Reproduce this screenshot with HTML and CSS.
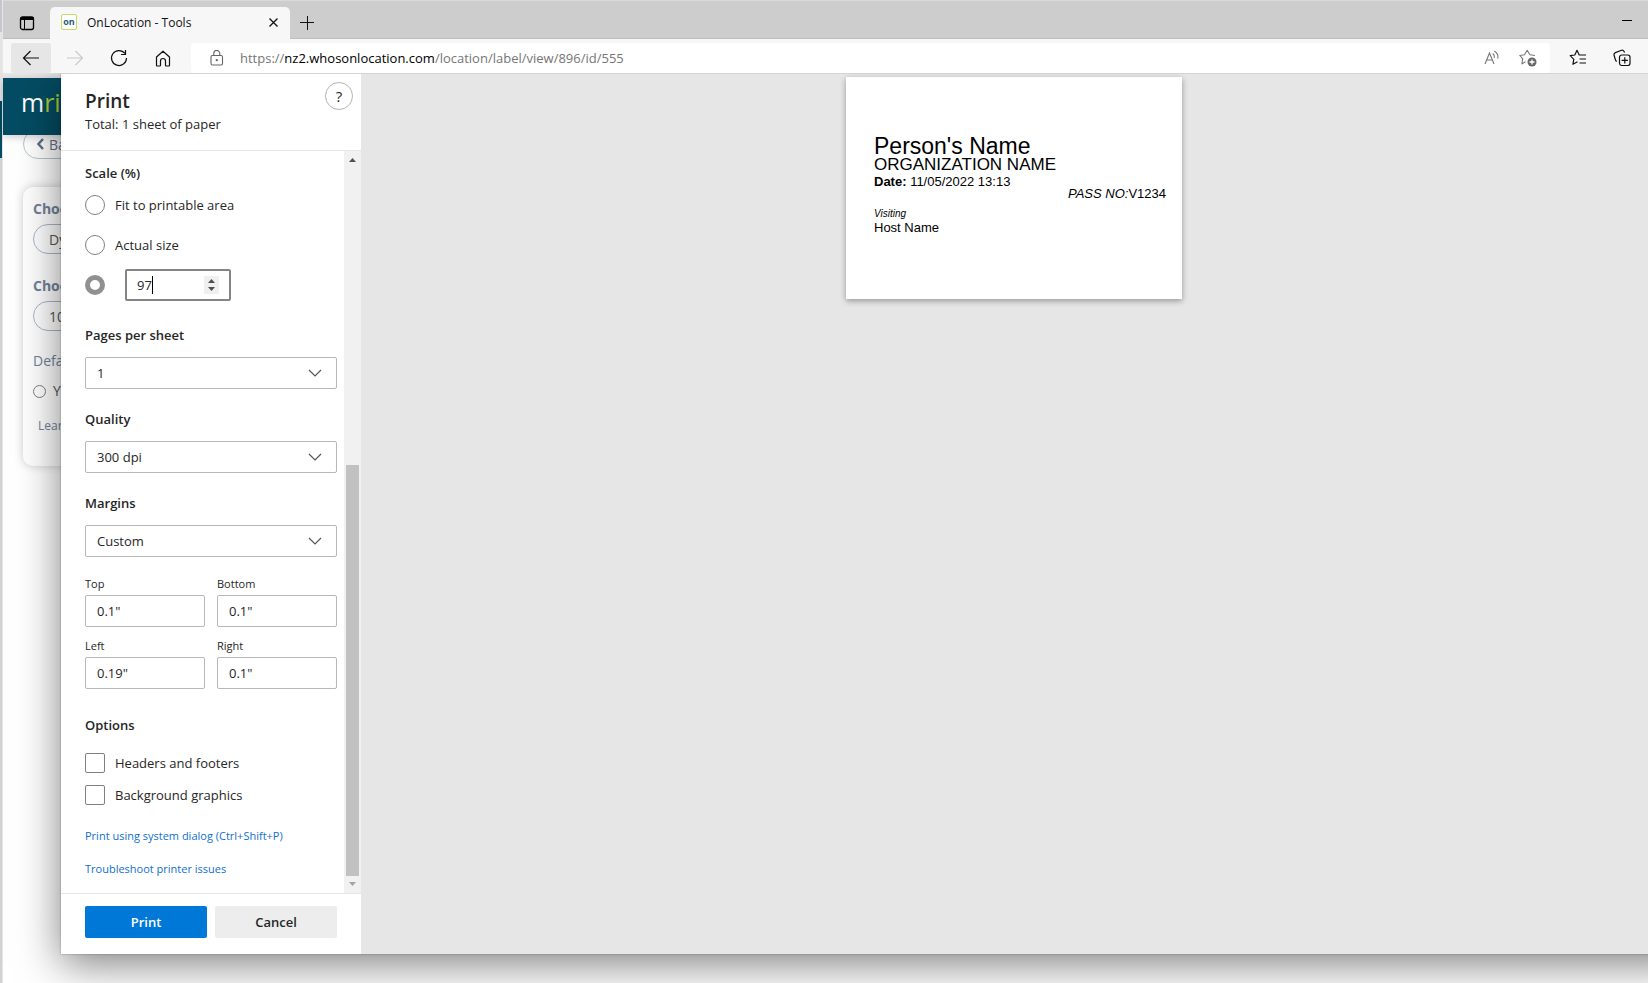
FILE: index.html
```
<!DOCTYPE html>
<html lang="en">
<head>
  <meta charset="UTF-8">
  <meta name="viewport" content="width=device-width, initial-scale=1.0">
  <title>OnLocation - Tools</title>
  <link rel="stylesheet" href="styles.css">
</head>
<body>
  <div class="window-edge"></div>
  <div class="browser">
    <header class="chrome">
      <div class="tab-bar">
        <button class="tab-actions" aria-label="Tab actions">
          <svg width="16" height="16" viewBox="0 0 16 16" fill="none" stroke="#000"><rect x="1.5" y="2" width="13" height="12.5" rx="2" stroke-width="1.3"/><path d="M1.500 3.500h13" stroke-width="3"/><path d="M5.500 5v9"/></svg>
        </button>
        <div class="tab">
          <span class="favicon">on</span>
          <span class="tab-title">OnLocation - Tools</span>
          <button class="tab-close" aria-label="Close tab">
            <svg width="9" height="9" viewBox="0 0 9 9" stroke="#111" stroke-width="1.3"><path d="M.5.5l8 8M8.500.5l-8 8"/></svg>
          </button>
        </div>
        <button class="new-tab" aria-label="New tab">
          <svg width="14" height="14" viewBox="0 0 14 14" stroke="#111"><path d="M0 6.500h14M7.500 0v14"/></svg>
        </button>
        <button class="minimize" aria-label="Minimize">
          <svg width="10" height="10" viewBox="0 0 10 10" stroke="#000"><path d="M0 2.500h10"/></svg>
        </button>
      </div>
      <nav class="toolbar">
        <button class="nav-btn active" aria-label="Back">
          <svg width="18" height="16" viewBox="0 0 18 16" fill="none" stroke="#111" stroke-width="1.2"><path d="M8.500 1l-7 7 7 7M1.500 8H17"/></svg>
        </button>
        <button class="nav-btn" aria-label="Forward">
          <svg width="18" height="16" viewBox="0 0 18 16" fill="none" stroke="#c8c8c8" stroke-width="1.1"><path d="M9.500 1l7 7-7 7M16.500 8H1"/></svg>
        </button>
        <button class="nav-btn" aria-label="Refresh">
          <svg width="18" height="18" viewBox="0 0 18 18" fill="none" stroke="#111" stroke-width="1.200"><path d="M16.500 9A7.500 7.500 0 1 1 14.900 4.400M15.500 1v4.500H11"/></svg>
        </button>
        <button class="nav-btn" aria-label="Home">
          <svg width="16" height="17" viewBox="0 0 16 17" fill="none" stroke="#111" stroke-width="1.200" stroke-linejoin="round"><path d="M1.500 7L8 1.200 14.500 7v8.300a.7.7 0 0 1-.7.7h-2.600a.7.7 0 0 1-.7-.7V11a2.500 2.500 0 0 0-5 0v4.300a.7.7 0 0 1-.7.7H2.200a.7.7 0 0 1-.7-.7z"/></svg>
        </button>
        <div class="address">
          <svg class="lock" width="14" height="16" viewBox="0 0 14 16" fill="none" stroke="#666" stroke-width="1.100"><rect x="1" y="5.500" width="11.500" height="9.500" rx="1.500"/><path d="M3.800 5.500v-2a3 3 0 0 1 6 0v2"/><circle cx="6.800" cy="10.200" r=".6" fill="#666"/></svg>
          <span class="url">https://<b>nz2.whosonlocation.com</b>/location/label/view/896/id/555</span>
          <button class="addr-btn" aria-label="Read aloud">
            <svg width="17" height="16" viewBox="0 0 17 16" fill="none" stroke="#777" stroke-width="1.100"><path d="M1 14L5.500 3l4.500 11M2.600 10h5.800M8.800 3.500q2 1.600 1.600 4.300M10.300 1q4.700 3 3.500 7.600"/></svg>
          </button>
          <button class="addr-btn" aria-label="Add to favorites">
            <svg width="18" height="18" viewBox="0 0 18 18" fill="none" stroke="#777" stroke-width="1.100" stroke-linejoin="round"><path d="M6.500 12.700l-3.600 2.200.8-5L.8 6.500l4.700-.7 2.700-4.500 2.700 4.500 5 .7"/><circle cx="13" cy="13" r="4.500" fill="#666" stroke="none"/><path d="M10.500 13h5M13 10.500v5" stroke="#fff" stroke-width="1.300"/></svg>
          </button>
        </div>
        <button class="side-btn" aria-label="Favorites">
          <svg width="18" height="18" viewBox="0 0 18 18" fill="none" stroke="#111" stroke-width="1.200" stroke-linejoin="round"><path d="M8.500 12.700l-4.600 2.600.9-5L1.200 6.700l4.600-.7L8 1.300 10.200 6H17M10.500 10H17M10.500 14H17"/></svg>
        </button>
        <button class="side-btn" aria-label="Collections">
          <svg width="18" height="18" viewBox="0 0 18 18" fill="none" stroke="#111" stroke-width="1.200"><path d="M3.800 12.500q-1-.5-1.400-1.800L1 6q-.3-1.800 1.400-2.400L8.500 1.300q1.600-.5 2.600 1.200l.5 1"/><rect x="6.500" y="6" width="10.500" height="10.500" rx="2.200"/><path d="M11.800 8.200v6.200M8.600 11.300h6.300"/></svg>
        </button>
      </nav>
    </header>

    <main class="page">
      <div class="site-header"><span class="logo">m<i>ri</i></span></div>
      <a class="back" href="#">
        <svg width="7" height="12" viewBox="0 0 7 12" fill="none" stroke="#5f7186" stroke-width="2.4"><path d="M6 1L1.500 6 6 11"/></svg>Back
      </a>
      <form class="label-card">
        <label class="card-title" for="printer">Choose</label>
        <input class="pill" id="printer" type="text" value="Dymo">
        <label class="card-title" for="label-size">Choose</label>
        <input class="pill" id="label-size" type="text" value="101">
        <p class="default">Default</p>
        <label class="yes"><input type="radio" name="default">Yes</label>
        <a class="learn" href="#">Learn</a>
      </form>
    </main>
  </div>

  <div class="print-dialog" role="dialog" aria-label="Print">
    <form class="panel">
      <div class="panel-header">
        <div>
          <h1>Print</h1>
          <p>Total: 1 sheet of paper</p>
        </div>
        <button type="button" class="help" aria-label="Help">?</button>
      </div>

      <div class="panel-body">
        <div class="settings">
          <fieldset class="scale">
            <legend>Scale (%)</legend>
            <label class="choice"><input type="radio" name="scale">Fit to printable area</label>
            <label class="choice"><input type="radio" name="scale">Actual size</label>
            <div class="custom-scale">
              <input type="radio" name="scale" aria-label="Custom scale" checked>
              <div class="number-box">
                <input type="number" value="97" aria-label="Scale percent">
                <span class="caret"></span>
                <svg width="15" height="18" viewBox="0 0 15 18"><rect width="15" height="18" fill="#f0f0f0"/><path d="M4 7l3.500-4L11 7zM4 11l3.500 4 3.500-4z" fill="#505050"/></svg>
              </div>
            </div>
          </fieldset>

          <div class="setting">
            <label for="pages">Pages per sheet</label>
            <div class="select-box">
              <select id="pages"><option>1</option></select>
              <svg width="14" height="8" viewBox="0 0 14 8"><path d="M1 1l6 6 6-6"/></svg>
            </div>
          </div>
          <div class="setting">
            <label for="quality">Quality</label>
            <div class="select-box">
              <select id="quality"><option>300 dpi</option></select>
              <svg width="14" height="8" viewBox="0 0 14 8"><path d="M1 1l6 6 6-6"/></svg>
            </div>
          </div>
          <div class="setting">
            <label for="margins">Margins</label>
            <div class="select-box">
              <select id="margins"><option>Custom</option></select>
              <svg width="14" height="8" viewBox="0 0 14 8"><path d="M1 1l6 6 6-6"/></svg>
            </div>
          </div>

          <div class="margin-grid">
            <label>Top<input type="text" value='0.1"'></label>
            <label>Bottom<input type="text" value='0.1"'></label>
            <label>Left<input type="text" value='0.19"'></label>
            <label>Right<input type="text" value='0.1"'></label>
          </div>

          <fieldset class="options">
            <legend>Options</legend>
            <label class="choice"><input type="checkbox">Headers and footers</label>
            <label class="choice"><input type="checkbox">Background graphics</label>
          </fieldset>

          <div class="links">
            <a href="#">Print using system dialog (Ctrl+Shift+P)</a>
            <a href="#">Troubleshoot printer issues</a>
          </div>
        </div>

        <div class="scrollbar">
          <svg width="7" height="4" viewBox="0 0 7 4"><path d="M0 4l3.500-4L7 4z" fill="#505050"/></svg>
          <div class="track"><div class="thumb"></div></div>
          <svg width="7" height="4" viewBox="0 0 7 4"><path d="M0 0l3.500 4L7 0z" fill="#a3a3a3"/></svg>
        </div>
      </div>

      <div class="panel-footer">
        <button type="submit" class="primary">Print</button>
        <button type="button">Cancel</button>
      </div>
    </form>

    <section class="preview">
      <div class="sheet">
        <p class="person">Person's Name</p>
        <p class="org">ORGANIZATION NAME</p>
        <p class="date"><b>Date:</b> 11/05/2022 13:13</p>
        <p class="pass"><i>PASS NO:</i>V1234</p>
        <p class="visiting">Visiting</p>
        <p class="host">Host Name</p>
      </div>
    </section>
  </div>
</body>
</html>
```
FILE: styles.css
```
* { box-sizing: border-box; margin: 0; padding: 0; }

body {
  display: flex;
  position: relative;
  height: 100vh;
  overflow: hidden;
  background: #fff;
  font-family: "Segoe UI", "Open Sans", "Noto Sans", sans-serif;
  font-size: 13px;
  color: #262626;
}

button, input, select { font: inherit; color: inherit; }
button { border: 0; background: none; }
fieldset { border: 0; }
a { text-decoration: none; }

.window-edge {
  width: 3px;
  flex-shrink: 0;
  border-right: 1px solid #e6e6e6;
  background: linear-gradient(#c4c8cc 32px, #e4e4e4 32px, #e4e4e4 101px, #044c63 101px, #044c63 158px, #d2d2d2 158px);
}

.browser {
  flex: 1;
  display: flex;
  flex-direction: column;
  min-width: 0;
}

/* browser chrome */
.chrome {
  position: relative;
  z-index: 2;
}

.tab-bar {
  display: flex;
  align-items: flex-end;
  height: 39px;
  background: #cdcdcd;
  border-top: 1px solid #dadada;
  box-shadow: inset 0 -1px #bebebe;
}

.tab-bar button {
  display: flex;
  align-items: center;
  justify-content: center;
  height: 32px;
}

.tab-actions { width: 47px; }

.tab {
  display: flex;
  align-items: center;
  width: 240px;
  height: 32px;
  padding: 0 2px 2px 11px;
  background: #f7f7f7;
  border-radius: 5px 5px 0 0;
  font-size: 12px;
  color: #111;
}

.favicon {
  width: 16px;
  height: 16px;
  margin-right: 10px;
  border: 1px solid #c8d96a;
  border-radius: 2px;
  background: #fff;
  color: #1d6078;
  font-size: 9px;
  font-weight: 700;
  line-height: 13px;
  text-align: center;
}

.tab-title { flex: 1; }
.tab-close { width: 30px; }
.new-tab { width: 34px; }
.minimize { width: 42px; margin-left: auto; }

.toolbar {
  display: flex;
  align-items: center;
  height: 34px;
  padding: 4px 0 0 8px;
  background: #f7f7f7;
}

.toolbar button {
  display: flex;
  align-items: center;
  justify-content: center;
  height: 30px;
}

.nav-btn { width: 40px; margin-right: 4px; border-radius: 3px; }
.toolbar .active { background: #e6e6e6; }

.address {
  flex: 1;
  display: flex;
  align-items: center;
  height: 30px;
  margin-left: 4px;
  padding: 0 4px 0 19px;
  background: #fff;
  border-radius: 4px;
}

.url {
  flex: 1;
  margin-left: 16px;
  color: #767676;
}

.url b { font-weight: 400; color: #000; }
.addr-btn { width: 36px; }
.side-btn { width: 44px; margin-left: 6px; }
.side-btn:last-child { margin: 0 4px 0 0; }

/* page behind the dialog */
.page {
  flex: 1;
  border-top: 5px solid #e9e9e9;
  background: #fff;
}

.site-header {
  position: relative;
  height: 57px;
  padding: 8px 0 0 18px;
  background: #044c63;
  box-shadow: 0 2px 8px rgba(0, 0, 0, 0.2);
}

.logo {
  color: #fff;
  font-size: 25px;
  line-height: 32px;
}

.logo i { font-style: normal; color: #a9cf38; }

.back {
  display: flex;
  align-items: center;
  gap: 5px;
  width: 96px;
  height: 30px;
  margin: -6px 0 0 20px;
  padding-left: 13px;
  border: 1px solid #b6c6cc;
  border-radius: 15px;
  font-size: 14px;
  color: #5f7186;
}

.label-card {
  display: flex;
  flex-direction: column;
  align-items: flex-start;
  width: 400px;
  height: 279px;
  margin: 28px 0 0 20px;
  padding: 12px 10px;
  border-radius: 10px;
  box-shadow: 0 0 10px rgba(0, 0, 0, 0.2);
  color: #71829a;
}

.card-title { font-size: 14px; font-weight: 700; line-height: 20px; }

.pill {
  width: 300px;
  height: 30px;
  margin: 5px 0 22px;
  padding-left: 15px;
  border: 1px solid #a9b7ca;
  border-radius: 15px;
  background: #fff;
  font-size: 14px;
  color: #555;
}

.pill + .default { margin-top: -2px; }
.default { font-size: 14px; line-height: 20px; }

.yes {
  display: flex;
  align-items: center;
  gap: 7px;
  margin-top: 10px;
  font-size: 14px;
  line-height: 20px;
  color: #555;
}

.yes input { width: 13px; height: 13px; }
.learn { margin: 15px 0 0 5px; font-size: 12px; line-height: 20px; color: #71829a; }

/* print dialog, runs past the right side of the window */
.print-dialog {
  position: absolute;
  top: 73px;
  right: -40px;
  bottom: 29px;
  left: 61px;
  z-index: 1;
  display: flex;
  background: #e6e6e6;
  border-top: 1px solid #d4d4d4;
  box-shadow: 0 0 2px rgba(0, 0, 0, 0.3), 0 10px 40px rgba(0, 0, 0, 0.5);
}

.panel {
  display: flex;
  flex-direction: column;
  width: 300px;
  background: #fff;
}

.panel-header {
  display: flex;
  justify-content: space-between;
  height: 77px;
  padding: 8px 8px 0 24px;
  border-bottom: 1px solid #e6e6e6;
}

.panel-header h1 { font-size: 19px; font-weight: 600; line-height: 38px; }
.panel-header p { line-height: 8px; }

.help {
  width: 28px;
  height: 28px;
  border: 1px solid #b4b4b4;
  border-radius: 50%;
  font-size: 15px;
  line-height: 26px;
}

.panel-body {
  flex: 1;
  display: flex;
  min-height: 0;
}

.settings {
  flex: 1;
  padding: 12px 7px 0 24px;
}

legend, .setting label { display: block; font-weight: 600; line-height: 20px; }

input[type="radio"], input[type="checkbox"] {
  appearance: none;
  flex-shrink: 0;
  border: 1px solid #808080;
  border-radius: 50%;
  background: #fff;
}

.settings input[type="radio"], .settings input[type="checkbox"] { width: 20px; height: 20px; }
.settings input[type="checkbox"] { border-radius: 2px; }
.settings input[type="radio"]:checked { border: 5px solid #909090; }

.choice {
  display: flex;
  align-items: center;
  gap: 10px;
  height: 20px;
}

.scale .choice { margin: 12px 0 20px; }
.scale .choice + .choice { margin-bottom: 14px; }

.custom-scale { display: flex; align-items: center; gap: 20px; }

.number-box {
  display: flex;
  align-items: center;
  position: relative;
  width: 106px;
  height: 32px;
  padding: 0 10px;
  border: 2px solid #848484;
  border-radius: 2px;
}

.number-box input {
  flex: 1;
  min-width: 0;
  border: 0;
  outline: 0;
  appearance: textfield;
}

.number-box input::-webkit-inner-spin-button { appearance: none; }

.caret {
  position: absolute;
  left: 25px;
  width: 1px;
  height: 18px;
  background: #000;
}

.setting { margin-top: 24px; }
.setting + .setting { margin-top: 20px; }

.select-box {
  display: grid;
  align-items: center;
  margin-top: 12px;
}

.select-box > * { grid-area: 1 / 1; }

.select-box select {
  appearance: none;
  width: 100%;
  height: 32px;
  padding: 0 11px;
  border: 1px solid #b8b8b8;
  border-radius: 2px;
  background: #fff;
}

.select-box svg {
  justify-self: end;
  margin-right: 15px;
  fill: none;
  stroke: #555;
  stroke-width: 1.2;
  pointer-events: none;
}

.margin-grid {
  display: grid;
  grid-template-columns: 1fr 1fr;
  gap: 10px 12px;
  margin-top: 18px;
}

.margin-grid label { font-size: 11px; line-height: 18px; }

.margin-grid input {
  display: block;
  width: 100%;
  height: 32px;
  margin-top: 2px;
  padding: 0 11px;
  border: 1px solid #b8b8b8;
  border-radius: 2px;
  font-size: 13px;
}

.options { margin-top: 26px; }
.options .choice { margin-top: 18px; }
.options .choice + .choice { margin-top: 12px; }

.links {
  display: flex;
  flex-direction: column;
  gap: 13px;
  margin-top: 21px;
  font-size: 11px;
  line-height: 20px;
}

.links a { color: #0f6fcb; }

.scrollbar {
  display: flex;
  flex-direction: column;
  align-items: center;
  width: 17px;
  padding: 7px 0;
  background: #f1f1f1;
}

.track {
  flex: 1;
  display: flex;
  align-items: flex-end;
  padding: 6px 0;
}

.thumb { width: 13px; height: 58%; background: #c1c1c1; }

.panel-footer {
  display: flex;
  gap: 8px;
  height: 61px;
  padding: 12px 24px 0;
  border-top: 1px solid #e6e6e6;
}

.panel-footer button {
  flex: 1;
  height: 32px;
  border-radius: 2px;
  background: #ededed;
  font-weight: 600;
}

.panel-footer .primary { background: #0078d7; color: #fff; }

/* label preview */
.preview {
  flex: 1;
  display: flex;
  justify-content: center;
  align-items: flex-start;
  padding: 3px 21px 0 0;
}

.sheet {
  width: 336px;
  height: 222px;
  padding: 59px 16px 0 28px;
  background: #fff;
  box-shadow: 0 2px 6px rgba(0, 0, 0, 0.35);
  font-family: Arial, "Liberation Sans", sans-serif;
  font-size: 13px;
  color: #000;
}

.person { font-size: 23px; line-height: 20px; }
.org { font-size: 17px; line-height: 18px; }
.date { line-height: 15px; }
.pass { line-height: 10px; text-align: right; }
.visiting { margin-top: 9px; font-size: 10px; font-style: italic; line-height: 12px; }
.host { line-height: 16px; }
```
